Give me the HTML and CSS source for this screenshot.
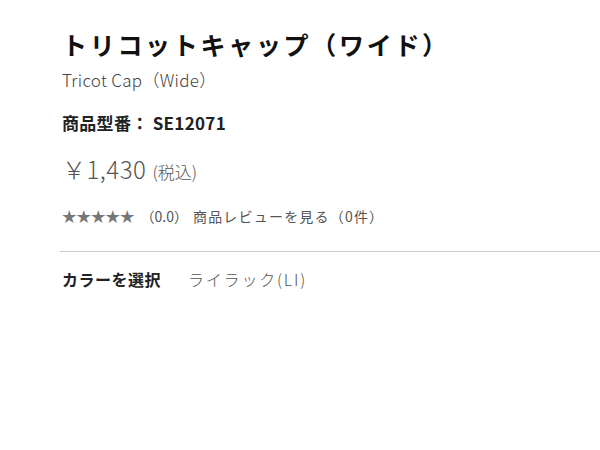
FILE: index.html
```html
<!DOCTYPE html>
<html lang="ja">
<head>
<meta charset="utf-8">
<link rel="stylesheet" href="styles.css">
</head>
<body>
<div class="product">
  <h1 class="title">トリコットキャップ（ワイド）</h1>
  <p class="subtitle">Tricot Cap（Wide）</p>
  <p class="code">商品型番： SE12071</p>
  <p class="price"><span class="amount">￥1,430</span><span class="tax">(税込)</span></p>
  <div class="review"><span class="stars">★★★★★</span><span class="score">（0.0）</span><span class="link">商品レビューを見る（0件）</span></div>
  <div class="color-row"><span class="color-label">カラーを選択</span><span class="color-value">ライラック(LI)</span></div>
</div>
</body>
</html>
```
FILE: styles.css
```css
html, body { margin: 0; padding: 0; background: #fff; }
body { font-family: "Noto Sans CJK JP", "Noto Sans", sans-serif; color: #222; }
.product { padding: 24px 0 0 62px; }
.title { margin: 0; font-size: 25px; font-weight: 700; letter-spacing: 2.7px; line-height: 40px; color: #111; }
.subtitle { margin: 5px 0 0; font-size: 17px; line-height: 22px; color: #444; font-weight: 300; letter-spacing: 0.3px; }
.code { margin: 20px 0 0; font-size: 17px; font-weight: 700; line-height: 24px; color: #222; letter-spacing: 0.3px; }
.price { margin: 17px 0 0; line-height: 34px; color: #555; display: flex; align-items: baseline; }
.amount { font-size: 24px; font-weight: 300; letter-spacing: 0.5px; }
.tax { font-size: 17px; margin-left: 6px; font-weight: 300; }
.review { margin-top: 17px; font-size: 14px; line-height: 20px; color: #555; display: flex; align-items: center; padding-bottom: 25px; border-bottom: 1px solid #ccc; margin-left: -2px; padding-left: 2px; }
.stars { color: #777; font-size: 14.5px; letter-spacing: 0; }
.score { margin-left: 6px; }
.link { margin-left: 5px; letter-spacing: 1.2px; }
.color-row { margin-top: 15px; display: flex; align-items: baseline; font-size: 16px; line-height: 24px; }
.color-label { font-weight: 700; color: #222; letter-spacing: 0.5px; }
.color-value { margin-left: 27px; color: #555; letter-spacing: 1.8px; font-weight: 300; }
```
